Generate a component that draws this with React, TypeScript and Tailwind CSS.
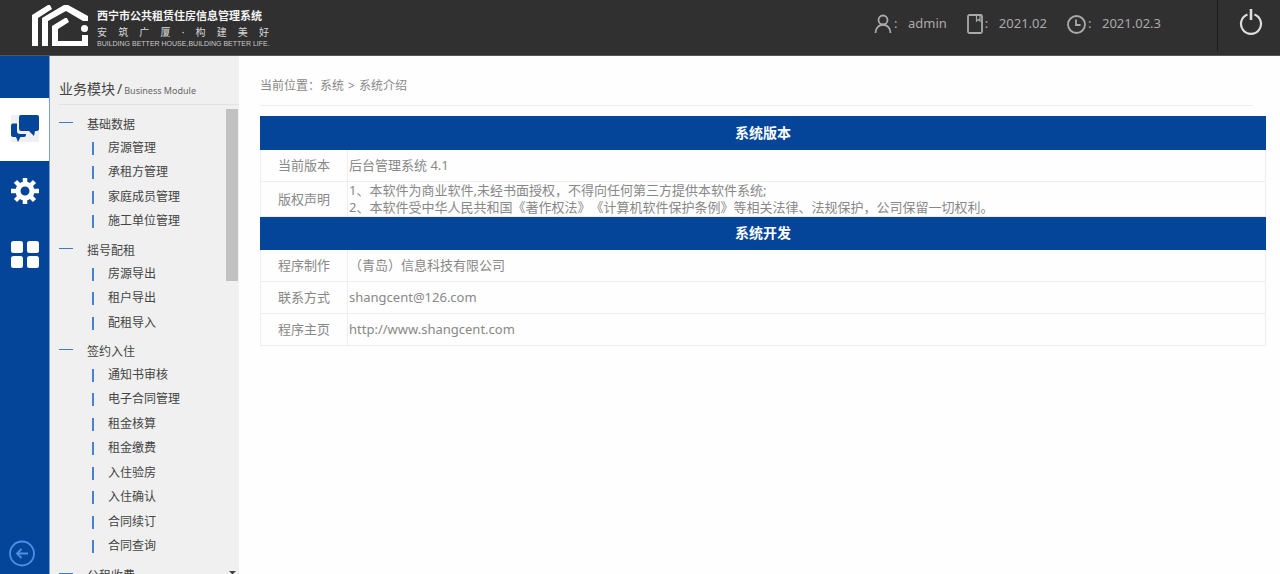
import { Fragment } from "react";

const menu = [
    { title: "基础数据", items: ["房源管理", "承租方管理", "家庭成员管理", "施工单位管理"] },
    { title: "摇号配租", items: ["房源导出", "租户导出", "配租导入"] },
    {
        title: "签约入住",
        items: ["通知书审核", "电子合同管理", "租金核算", "租金缴费", "入住验房", "入住确认", "合同续订", "合同查询"],
    },
    { title: "公租收费", items: [] },
];

const sections = [
    {
        title: "系统版本",
        rows: [
            { label: "当前版本", lines: ["后台管理系统 4.1"] },
            {
                label: "版权声明",
                lines: [
                    "1、本软件为商业软件,未经书面授权，不得向任何第三方提供本软件系统;",
                    "2、本软件受中华人民共和国《著作权法》《计算机软件保护条例》等相关法律、法规保护，公司保留一切权利。",
                ],
            },
        ],
    },
    {
        title: "系统开发",
        rows: [
            { label: "程序制作", lines: ["（青岛）信息科技有限公司"] },
            { label: "联系方式", lines: ["shangcent@126.com"] },
            { label: "程序主页", lines: ["http://www.shangcent.com"] },
        ],
    },
];

function Logo() {
    return (
        <a href="#" className="flex items-start gap-2 pl-8 pt-1 text-[#f4f4f4]">
            <svg width="57" height="43" viewBox="0 0 57 43" fill="#fff">
                <path d="M0 42V11L16 1H18L20 5L6 14V42Z" />
                <path d="M10 42V14L32 1H36L56 12V17H51L34 7L16 17V42Z" />
                <path d="M20 42V22L33 14H35L37 18L26 25V37H50V31H56V42Z" />
                <circle cx="52.500" cy="24.500" r="3.500" />
            </svg>
            <div className="w-[172px] pt-1">
                <div className="whitespace-nowrap text-[11px] font-bold leading-4">西宁市公共租赁住房信息管理系统</div>
                <div className="flex justify-between text-[10px] leading-4 text-[#d8d8d8]">
                    {["安", "筑", "广", "厦", "·", "构", "建", "美", "好"].map((c) => (
                        <span key={c}>{c}</span>
                    ))}
                </div>
                <div className="whitespace-nowrap font-['Liberation_Sans',sans-serif] text-[7px] leading-[7px] text-[#c8c8c8]">
                    BUILDING BETTER HOUSE,BUILDING BETTER LIFE.
                </div>
            </div>
        </a>
    );
}

function Header() {
    return (
        <header className="flex h-14 justify-between border-b border-[#555] bg-[#303030]">
            <Logo />
            <div className="flex">
                <div className="flex h-12 items-center gap-5 pr-14 text-[13px] text-[#aaa]">
                    <div className="flex items-center">
                        <svg width="18" height="20" viewBox="0 0 18 20" fill="none" stroke="#aaa" strokeWidth="1.800">
                            <circle cx="9" cy="6" r="4.500" />
                            <path d="M1.500 19C1.500 8 16.500 8 16.500 19" />
                        </svg>
                        <span className="w-4 pl-0.5">:</span>
                        <span>admin</span>
                    </div>
                    <div className="flex items-center">
                        <svg width="16" height="20" viewBox="0 0 16 20" fill="none" stroke="#aaa" strokeWidth="1.800">
                            <rect x="1" y="1" width="14" height="18" rx="1.500" />
                            <path d="M9.500 1V7L11.500 5.500L13 7V1" strokeWidth="1.200" />
                        </svg>
                        <span className="w-4 pl-0.5">:</span>
                        <span>2021.02</span>
                    </div>
                    <div className="flex items-center">
                        <svg width="19" height="19" viewBox="0 0 19 19" fill="none" stroke="#aaa" strokeWidth="1.800">
                            <circle cx="9.500" cy="9.500" r="8.500" />
                            <path d="M9 4.500V10H13.500" />
                        </svg>
                        <span className="w-4 pl-0.5">:</span>
                        <span>2021.02.3</span>
                    </div>
                </div>
                <button
                    aria-label="退出"
                    className="flex h-[51px] w-[63px] items-start justify-center border-l border-[#1c1c1c] pl-1 pt-2"
                >
                    <svg width="24" height="28" viewBox="0 0 24 28" fill="none" stroke="#ddd" strokeWidth="2.200">
                        <path d="M8.500 6.500A10 10 0 1 0 15.500 6.500" />
                        <path d="M12 1V12" strokeWidth="2.600" />
                    </svg>
                </button>
            </div>
        </header>
    );
}

function Rail() {
    return (
        <div className="flex w-[50px] shrink-0 flex-col border-r border-[#7f9fd0] bg-[#044599] pt-[42px]">
            <button aria-label="业务模块" className="flex h-[63px] items-center justify-center bg-white pb-[3px]">
                <svg width="28" height="27" viewBox="0 0 28 27" fill="#044599">
                    <rect width="28" height="27" fill="#f0f0f0" />
                    <path d="M2 8.500H6V16Q6 19 9 19H15V20Q15 22 13 22H9.500L7 27L5 22H2Q0 22 0 20V10.500Q0 8.500 2 8.500Z" />
                    <path d="M10 0H26Q28 0 28 2V14Q28 16 26 16H24L23 21L18 16H10Q8 16 8 14V2Q8 0 10 0Z" />
                </svg>
            </button>
            <button aria-label="设置" className="flex h-[63px] items-center justify-center pb-[3px]">
                <svg width="28" height="28" viewBox="0 0 28 28" fill="none" stroke="#fff">
                    <circle cx="14" cy="14" r="7" strokeWidth="5" />
                    <path
                        d="M14 1V6M14 22V27M0 14H6M22 14H28M4.500 4.500L8.500 8.500M19.500 19.500L23.500 23.500M4.500 23.500L8.500 19.500M19.500 8.500L23.500 4.500"
                        strokeWidth="4.500"
                    />
                </svg>
            </button>
            <button aria-label="应用" className="flex h-[63px] items-center justify-center pb-[3px]">
                <svg width="28" height="27" viewBox="0 0 28 27" fill="#fff">
                    <rect width="12" height="12" rx="2.500" />
                    <rect x="16" width="12" height="12" rx="2.500" />
                    <rect y="15" width="12" height="12" rx="2.500" />
                    <rect x="16" y="15" width="12" height="12" rx="2.500" />
                </svg>
            </button>
            <button aria-label="收起" className="mt-auto flex pb-[7px] pl-[9px]">
                <svg width="26" height="27" viewBox="0 0 26 27" fill="none" stroke="#4a90e8" strokeWidth="1.800">
                    <circle cx="13" cy="13.500" r="12" />
                    <path d="M19 13.500H8M12.500 9L8 13.500L12.500 18" />
                </svg>
            </button>
        </div>
    );
}

function Sidebar() {
    return (
        <aside className="flex w-[189px] shrink-0 flex-col overflow-hidden bg-[#f0f0f0] text-[#444]">
            <h2 className="ml-[9px] flex h-[49px] items-baseline border-b border-[#e2e2e2] pt-[22px] text-sm leading-[22px]">
                业务模块
                <span className="px-0.5">/</span>
                <span className="text-[9px] text-[#666]">Business Module</span>
            </h2>
            <div className="flex min-h-0 flex-1 justify-between pt-[3px]">
                <nav className="min-h-0 flex-1 overflow-hidden pl-[9px] text-xs">
                    {menu.map((group) => (
                        <div key={group.title} className="mb-px">
                            <button className="flex h-[27px] items-start pt-[5px] leading-6">
                                <span className="mt-[9px] h-px w-[14px] bg-[#3f7ac8]" />
                                <span className="pl-[14px]">{group.title}</span>
                            </button>
                            <ul className="pl-[33px]">
                                {group.items.map((item) => (
                                    <li key={item} className="h-6 even:h-[25px] last:h-6">
                                        <a href="#" className="flex h-[26px] items-center gap-[14px]">
                                            <span className="h-[13px] w-0.5 bg-[#4a80d0]" />
                                            {item}
                                        </a>
                                    </li>
                                ))}
                            </ul>
                        </div>
                    ))}
                </nav>
                <div className="mr-px flex w-3 flex-col items-center justify-between">
                    <div className="mt-px h-[172px] w-full bg-[#c1c1c1]" />
                    <svg width="7" height="3" viewBox="0 0 7 3" fill="#444">
                        <path d="M0 0H7L4 3H3Z" />
                    </svg>
                </div>
            </div>
        </aside>
    );
}

function InfoTable() {
    return (
        <table className="w-full border-collapse text-[13px] leading-[17px] text-[#888] [text-spacing-trim:space-all]">
            {sections.map((section) => (
                <Fragment key={section.title}>
                    <tbody>
                        <tr>
                            <th
                                colSpan={2}
                                scope="colgroup"
                                className="h-[33px] border border-[#044599] bg-[#044599] pb-0.5 text-sm font-bold leading-[17px] text-white"
                            >
                                {section.title}
                            </th>
                        </tr>
                        {section.rows.map((row) => (
                            <tr key={row.label}>
                                <th scope="row" className="h-8 w-[87px] border border-[#eee] font-normal">
                                    {row.label}
                                </th>
                                <td className="border border-[#eee] pl-px">
                                    {row.lines.map((line) => (
                                        <div key={line}>{line}</div>
                                    ))}
                                </td>
                            </tr>
                        ))}
                    </tbody>
                </Fragment>
            ))}
        </table>
    );
}

export default function App() {
    return (
        <div className="flex h-screen flex-col overflow-hidden bg-[#fefefe] font-['Noto_Sans','Noto_Sans_CJK_SC',sans-serif]">
            <Header />
            <div className="flex min-h-0 flex-1">
                <Rail />
                <Sidebar />
                <main className="min-w-0 flex-1 pl-[21px] pr-[14px]">
                    <div className="mr-[13px] flex h-[50px] items-center gap-1 border-b border-[#eee] pt-[11px] text-xs text-[#888]">
                        <span>当前位置：系统</span>
                        <span>&gt;</span>
                        <span>系统介绍</span>
                    </div>
                    <div className="pt-[10px]">
                        <InfoTable />
                    </div>
                </main>
            </div>
        </div>
    );
}
